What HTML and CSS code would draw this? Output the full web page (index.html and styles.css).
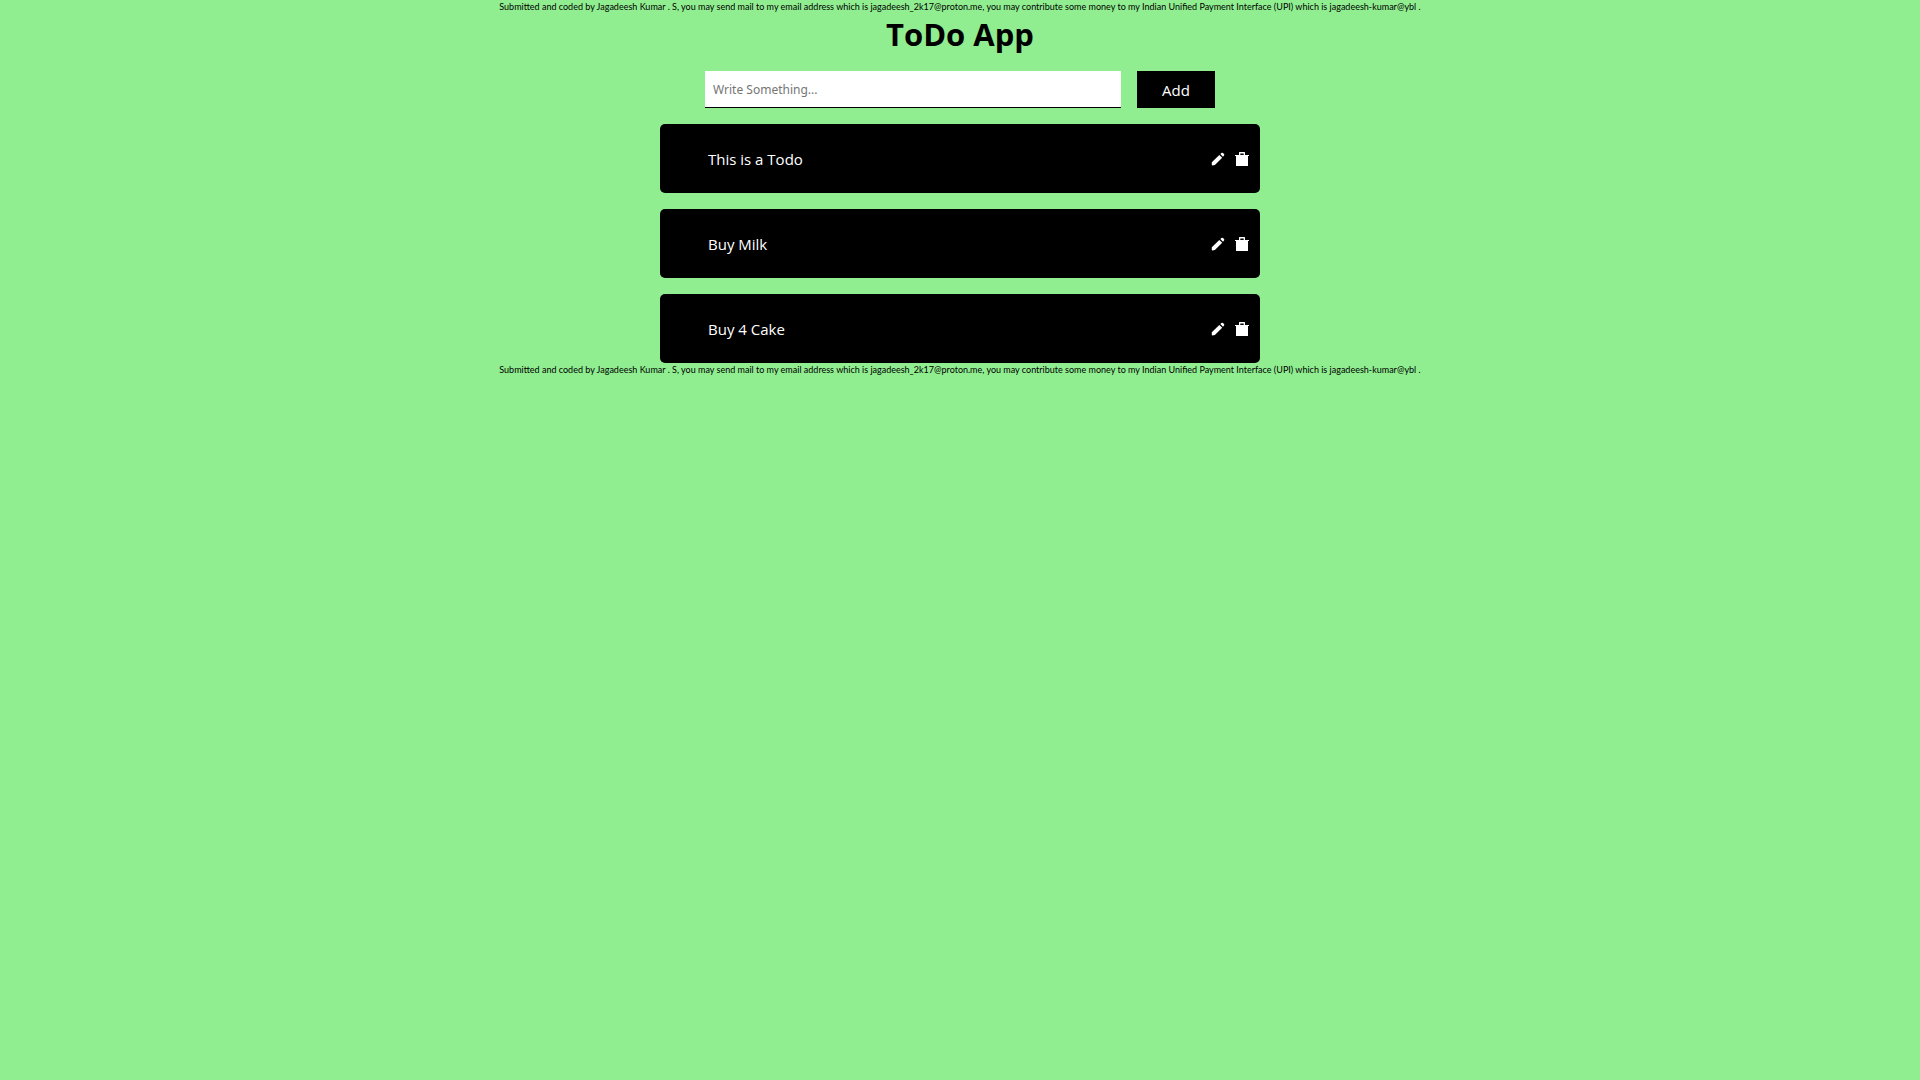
FILE: index.html
```html
<!DOCTYPE html>
<html lang="en">
<head>
<meta charset="utf-8">
<meta name="viewport" content="width=device-width, initial-scale=1">
<title>ToDo App</title>
<link rel="stylesheet" href="styles.css">
</head>
<body>
<svg class="sprite" aria-hidden="true">
  <symbol id="pencil" viewBox="0 0 14 14"><path d="M.8 10.200 8.300 2.900 11.200 5.800 3.900 13Q.8 13.900.8 13ZM9.300 2.100 10.400 1Q11.200.3 12 1L13 2Q13.700 2.800 13 3.600L12 4.700Z"/></symbol>
  <symbol id="trash" viewBox="0 0 14 14"><path d="M4 3V.5Q4 0 4.500 0H9.500Q10 0 10 .5V3H14V4H13V13.500Q13 14 12.500 14H1.500Q1 14 1 13.500V4H0V3ZM5.300 1.400V3H8.700V1.400Z"/></symbol>
</svg>
<header class="credit">Submitted and coded by Jagadeesh Kumar . S, you may send mail to my email address which is jagadeesh_2k17@proton.me, you may contribute some money to my Indian Unified Payment Interface (UPI) which is jagadeesh-kumar@ybl .</header>
<main class="app">
  <h1 class="title">ToDo App</h1>
  <form class="entry">
    <input class="entry-text" type="text" placeholder="Write Something..." aria-label="New todo">
    <button class="entry-add" type="button">Add</button>
  </form>
  <ul class="list">
    <li class="todo"><span class="todo-text">This is a Todo</span>
      <button class="icon-button" type="button" aria-label="Edit"><svg class="icon"><use href="#pencil"/></svg></button>
      <button class="icon-button" type="button" aria-label="Delete"><svg class="icon"><use href="#trash"/></svg></button></li>
    <li class="todo"><span class="todo-text">Buy Milk</span>
      <button class="icon-button" type="button" aria-label="Edit"><svg class="icon"><use href="#pencil"/></svg></button>
      <button class="icon-button" type="button" aria-label="Delete"><svg class="icon"><use href="#trash"/></svg></button></li>
    <li class="todo"><span class="todo-text">Buy 4 Cake</span>
      <button class="icon-button" type="button" aria-label="Edit"><svg class="icon"><use href="#pencil"/></svg></button>
      <button class="icon-button" type="button" aria-label="Delete"><svg class="icon"><use href="#trash"/></svg></button></li>
  </ul>
</main>
<footer class="credit">Submitted and coded by Jagadeesh Kumar . S, you may send mail to my email address which is jagadeesh_2k17@proton.me, you may contribute some money to my Indian Unified Payment Interface (UPI) which is jagadeesh-kumar@ybl .</footer>
</body>
</html>
```
FILE: styles.css
```css
* {
  box-sizing: border-box;
  margin: 0;
  padding: 0;
}

body {
  background: lightgreen;
  color: #000;
  font-family: "Segoe UI", "Open Sans", sans-serif;
  font-size: 15px;
  line-height: 20px;
}

.sprite {
  display: none;
}

.credit {
  font-family: "Segoe UI", Lato, sans-serif;
  font-size: 9px;
  line-height: 14px;
  text-align: center;
}

.app {
  max-width: 600px;
  margin: 0 auto;
}

.title {
  font-size: 31px;
  line-height: 41px;
  text-align: center;
}

.entry {
  display: flex;
  gap: 16px;
  padding: 16px 45px;
}

.entry-text {
  flex: 1;
  min-width: 0;
  height: 37px;
  padding: 0 8px;
  border: 0;
  border-bottom: 1px solid #000;
  background: #fff;
  font-family: "Noto Sans", sans-serif;
  font-size: 12px;
}

.entry-text::placeholder {
  color: #757575;
}

.entry-add {
  width: 78px;
  border: 0;
  background: #000;
  color: #fff;
  font: inherit;
}

.list {
  display: flex;
  flex-direction: column;
  gap: 16px;
  list-style: none;
}

.todo {
  display: flex;
  align-items: center;
  gap: 10px;
  min-height: 69px;
  padding: 0 11px 0 48px;
  border-radius: 5px;
  background: #000;
  color: #fff;
}

.todo-text {
  flex: 1;
}

.icon-button {
  display: flex;
  border: 0;
  background: none;
  color: inherit;
  cursor: pointer;
}

.icon {
  width: 14px;
  height: 14px;
  fill: currentColor;
}
```
